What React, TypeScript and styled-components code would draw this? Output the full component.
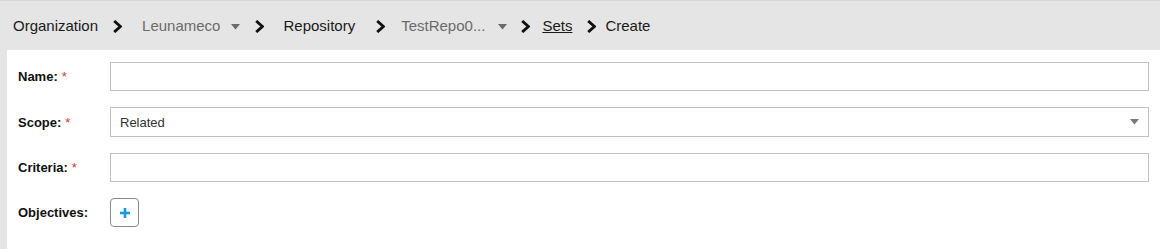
import React from "react";
import styled, { createGlobalStyle } from "styled-components";

const GlobalStyle = createGlobalStyle`
  html, body {
    margin: 0;
    padding: 0;
    background: #e5e5e5;
    font-family: "Liberation Sans", Arial, sans-serif;
  }
`;

const Page = styled.div`
  width: 1160px;
  height: 249px;
  background: #e5e5e5;
  border-top: 1px solid #d6d6d6;
  box-sizing: border-box;
  display: flex;
  flex-direction: column;
  overflow: hidden;
`;

const Breadcrumbs = styled.nav`
  height: 49px;
  display: flex;
  align-items: center;
  padding-left: 13px;
  font-size: 15px;
  color: #111;
`;

const Crumb = styled.span<{ $muted?: boolean; $link?: boolean }>`
  color: ${({ $muted }) => ($muted ? "#6b6b6b" : "#1a1a1a")};
  text-decoration: ${({ $link }) => ($link ? "underline" : "none")};
  white-space: nowrap;
`;

const Sep = styled.span<{ $before: number; $after: number }>`
  display: inline-flex;
  margin-left: ${({ $before }) => $before}px;
  margin-right: ${({ $after }) => $after}px;
  padding-top: 1px;
`;

const Caret = styled.span<{ $gap: number }>`
  display: inline-flex;
  margin-left: ${({ $gap }) => $gap}px;
  padding-top: 2px;
`;

const Panel = styled.main`
  flex: 1;
  margin-left: 7px;
  background: #fff;
  padding: 12px 11px 0 11px;
  display: flex;
  flex-direction: column;
  gap: 16px;
`;

const Row = styled.div`
  display: grid;
  grid-template-columns: 92px 1fr;
  align-items: center;
`;

const Label = styled.label`
  font-size: 13px;
  font-weight: bold;
  color: #111;
  white-space: nowrap;
`;

const Required = styled.span`
  color: #e0322b;
  font-weight: normal;
  margin-left: 4px;
`;

const TextInput = styled.input`
  height: 29px;
  box-sizing: border-box;
  border: 1px solid #c2c2c2;
  padding: 0 9px;
  font: 13px "Liberation Sans", Arial, sans-serif;
  outline: none;
  width: 100%;
`;

const SelectBox = styled.div`
  height: 30px;
  box-sizing: border-box;
  border: 1px solid #c2c2c2;
  padding: 0 9px;
  display: flex;
  align-items: center;
  justify-content: space-between;
  font-size: 13px;
  color: #333;
`;

const AddButton = styled.button`
  width: 29px;
  height: 29px;
  border: 1px solid #8a8a8a;
  border-radius: 4px;
  background: #fff;
  padding: 0;
  display: flex;
  align-items: center;
  justify-content: center;
`;

const Chevron = () => (
  <svg width="9" height="13" viewBox="0 0 9 13">
    <polyline points="1.2,1 7.4,6.5 1.2,12" fill="none" stroke="#111" strokeWidth="2.9" />
  </svg>
);

const Triangle = ({ color = "#6b6b6b" }: { color?: string }) => (
  <svg width="9" height="6" viewBox="0 0 9 6">
    <polygon points="0,0 9,0 4.5,5.5" fill={color} />
  </svg>
);

const Plus = () => (
  <svg width="10" height="10" viewBox="0 0 10 10">
    <rect x="3.7" y="0" width="2.6" height="10" fill="#1b9ae0" />
    <rect x="0" y="3.7" width="10" height="2.6" fill="#1b9ae0" />
  </svg>
);

export default function App() {
  return (
    <>
      <GlobalStyle />
      <Page>
        <Breadcrumbs>
          <Crumb>Organization</Crumb>
          <Sep $before={15} $after={20}><Chevron /></Sep>
          <Crumb $muted>Leunameco</Crumb>
          <Caret $gap={11}><Triangle /></Caret>
          <Sep $before={15} $after={19}><Chevron /></Sep>
          <Crumb>Repository</Crumb>
          <Sep $before={21} $after={16}><Chevron /></Sep>
          <Crumb $muted>TestRepo0...</Crumb>
          <Caret $gap={13}><Triangle /></Caret>
          <Sep $before={14} $after={12}><Chevron /></Sep>
          <Crumb $link>Sets</Crumb>
          <Sep $before={15} $after={9}><Chevron /></Sep>
          <Crumb>Create</Crumb>
        </Breadcrumbs>
        <Panel>
          <Row>
            <Label>Name:<Required>*</Required></Label>
            <TextInput />
          </Row>
          <Row>
            <Label>Scope:<Required>*</Required></Label>
            <SelectBox>
              <span>Related</span>
              <Triangle color="#7a7a7a" />
            </SelectBox>
          </Row>
          <Row>
            <Label>Criteria:<Required>*</Required></Label>
            <TextInput />
          </Row>
          <Row>
            <Label>Objectives:</Label>
            <AddButton><Plus /></AddButton>
          </Row>
        </Panel>
      </Page>
    </>
  );
}
